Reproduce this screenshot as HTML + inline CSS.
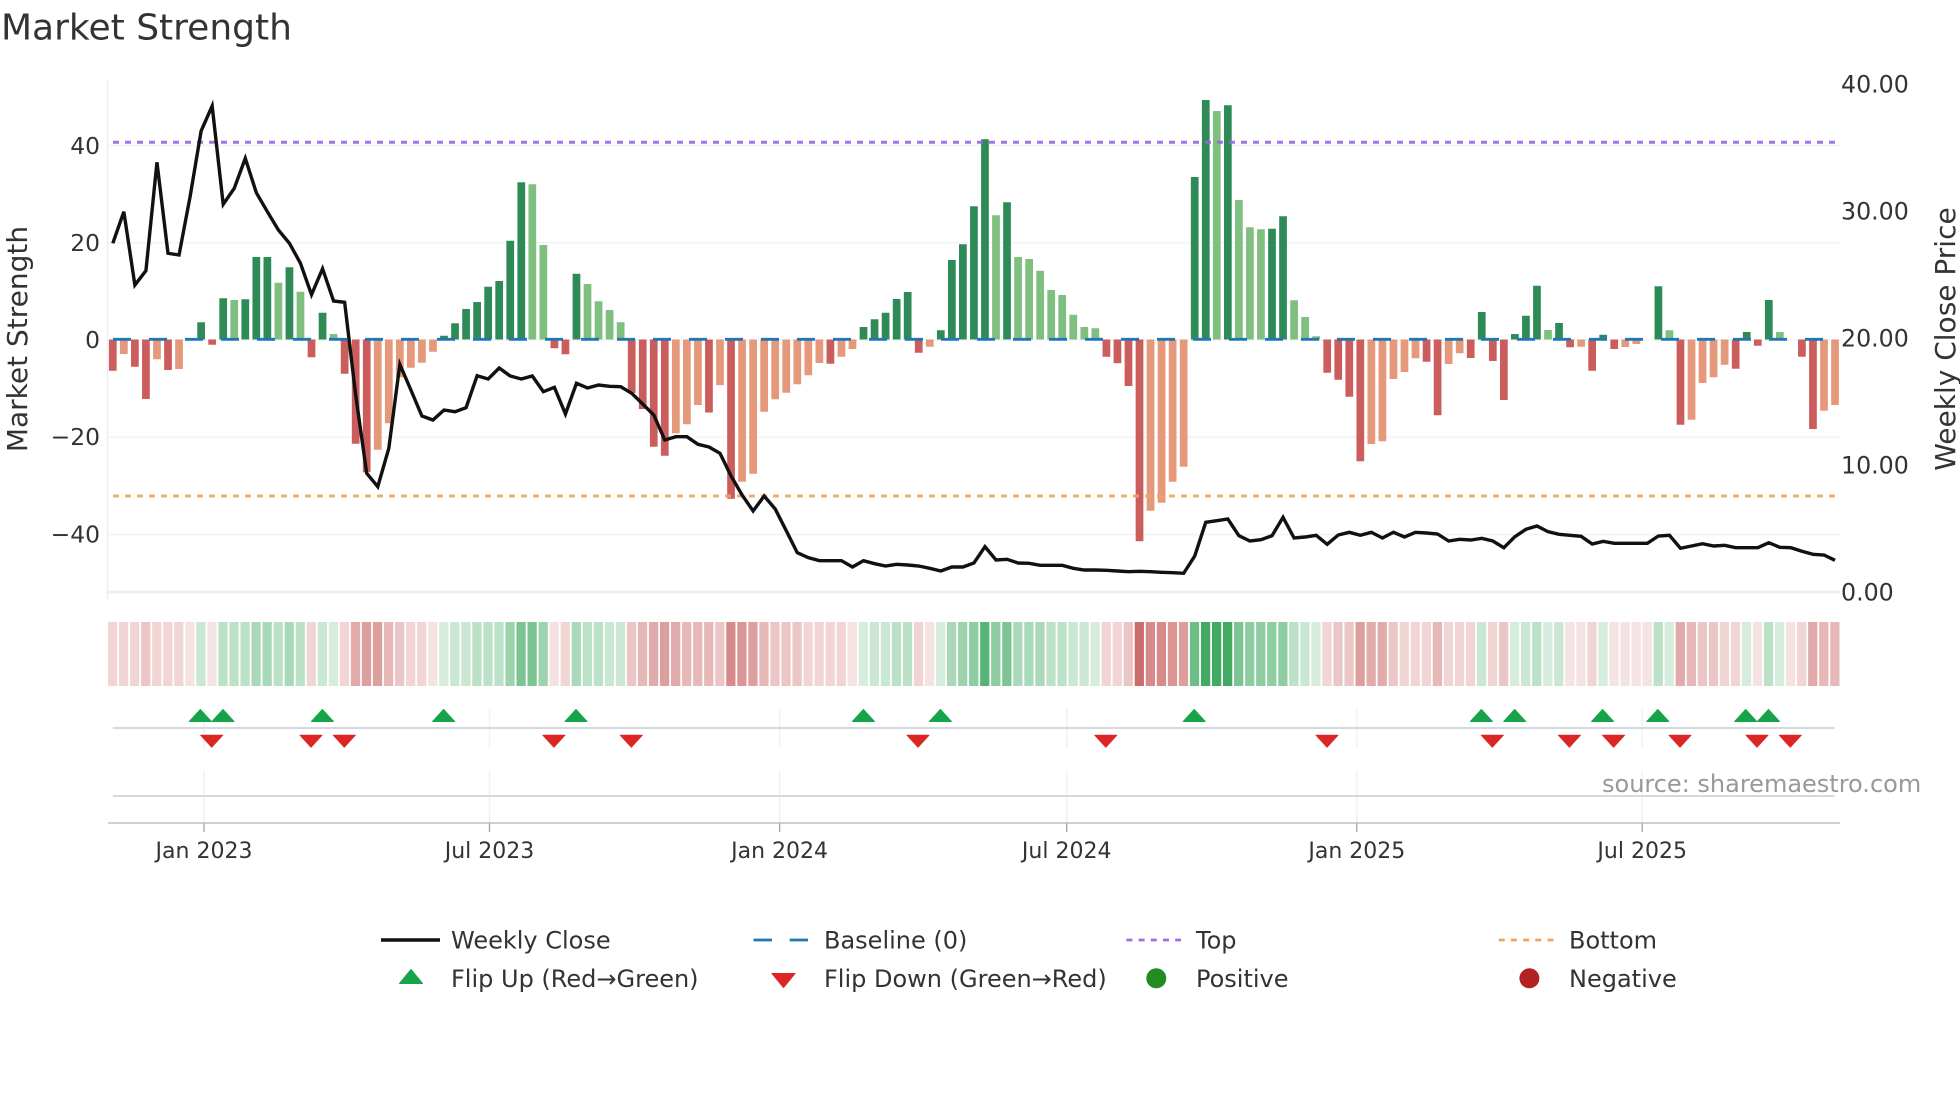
<!DOCTYPE html>
<html>
<head>
<meta charset="utf-8">
<title>Market Strength</title>
<style>
html,body{margin:0;padding:0;background:#fff}
svg{display:block}
text{font-family:"DejaVu Sans","Liberation Sans",sans-serif;fill:#333}
.yt{font-size:23.4px;text-anchor:end}
.rt{font-size:23.7px}
.xt{font-size:22px;text-anchor:middle}
.lg{font-size:24px}
</style>
</head>
<body>
<svg width="1960" height="1102" viewBox="0 0 1960 1102" xmlns="http://www.w3.org/2000/svg">
<rect width="1960" height="1102" fill="#fff"/>
<text x="1" y="39.5" style="font-size:36px">Market Strength</text>

<!-- grid -->
<g stroke="#f1f3f6" stroke-width="1.6" fill="none">
<path d="M107.5 80V599" stroke="#eef0f5"/>
<path d="M108 145.4H1840M108 242.7H1840M108 340H1840M108 437.3H1840M108 534.6H1840"/>
<path d="M108 592H1840" stroke="#eceef5" stroke-width="2.4"/>
</g>

<!-- bars -->
<g transform="translate(112.8 0) scale(11.04 1)" fill="none" stroke-width=".7">
<path stroke="#2e8b57" d="M8 339.5V322.3M10 339.5V298.3M12 339.5V299.3M13 339.5V257M14 339.5V257M16 339.5V267.3M19 339.5V312.7M30 339.5V335.7M31 339.5V323.3M32 339.5V309M33 339.5V302M34 339.5V286.7M35 339.5V281M36 339.5V240.7M37 339.5V182.3M42 339.5V273.7M68 339.5V327M69 339.5V319.3M70 339.5V312.7M71 339.5V299M72 339.5V292M75 339.5V330.3M76 339.5V260M77 339.5V244.3M78 339.5V206.3M79 339.5V139.3M81 339.5V202.3M98 339.5V177M99 339.5V100M101 339.5V105.3M105 339.5V228.7M106 339.5V216.3M124 339.5V312M127 339.5V334M128 339.5V315.7M129 339.5V285.7M131 339.5V323M135 339.5V334.7M140 339.5V286.3M148 339.5V332M150 339.5V300"/>
<path stroke="#7fbf7f" d="M11 339.5V300M15 339.5V282.7M17 339.5V291.7M20 339.5V334M38 339.5V184.3M39 339.5V245M43 339.5V284M44 339.5V301.3M45 339.5V310M46 339.5V322.3M80 339.5V215.3M82 339.5V257M83 339.5V259M84 339.5V270.7M85 339.5V290M86 339.5V295M87 339.5V314.7M88 339.5V327M89 339.5V328.3M100 339.5V111M102 339.5V200M103 339.5V227.3M104 339.5V229.3M107 339.5V300.3M108 339.5V317M109 339.5V336.3M130 339.5V330M141 339.5V330.3M151 339.5V332"/>
<path stroke="#cb5e5c" d="M0 339.5V370.7M2 339.5V366.7M3 339.5V399M5 339.5V370M9 339.5V344.7M18 339.5V357.3M21 339.5V373.7M22 339.5V443.7M23 339.5V472.3M40 339.5V348.3M41 339.5V354.3M47 339.5V393M48 339.5V409M49 339.5V446.7M50 339.5V455.7M54 339.5V412.5M56 339.5V498.7M65 339.5V363.7M73 339.5V352.7M90 339.5V356.7M91 339.5V363.3M92 339.5V386M93 339.5V541.3M110 339.5V372.7M111 339.5V379.7M112 339.5V396.7M113 339.5V461.3M119 339.5V361.7M120 339.5V415.3M123 339.5V358M125 339.5V361M126 339.5V400M132 339.5V347.3M134 339.5V370.7M136 339.5V349M142 339.5V424.7M147 339.5V368.7M149 339.5V345.7M153 339.5V356.7M154 339.5V429"/>
<path stroke="#e6987a" d="M1 339.5V354M4 339.5V359.3M6 339.5V369M24 339.5V449.7M25 339.5V423.3M26 339.5V377.3M27 339.5V367.7M28 339.5V362.7M29 339.5V351.7M51 339.5V433.3M52 339.5V424.3M53 339.5V405M55 339.5V385.3M57 339.5V481.7M58 339.5V473.7M59 339.5V411.7M60 339.5V399.3M61 339.5V392.7M62 339.5V384.3M63 339.5V375.3M64 339.5V363M66 339.5V356.7M67 339.5V349M74 339.5V346.7M94 339.5V510.7M95 339.5V502.7M96 339.5V481.7M97 339.5V466.7M114 339.5V444M115 339.5V441.3M116 339.5V379M117 339.5V372M118 339.5V358.3M121 339.5V364M122 339.5V353.3M133 339.5V346.7M137 339.5V347M138 339.5V344M143 339.5V419.7M144 339.5V383M145 339.5V377.3M146 339.5V364.7M155 339.5V410.7M156 339.5V405"/>
</g>

<!-- reference lines -->
<path d="M113 339.3H1835" stroke="#1f77b4" stroke-width="2.8" stroke-dasharray="18 18" fill="none"/>
<path d="M113 142.3H1835" stroke="#9467db" stroke-width="3" stroke-dasharray="6 6" fill="none" opacity=".9"/>
<path d="M113 496H1835" stroke="#f0a35e" stroke-width="3" stroke-dasharray="6 6" fill="none" opacity=".9"/>

<!-- weekly close line -->
<g transform="translate(112.8 0) scale(11.04 1)">
<polyline fill="none" stroke="#111" stroke-width="3.4" stroke-linejoin="miter" vector-effect="non-scaling-stroke" style="vector-effect:non-scaling-stroke" points="0,243.3 1,211.7 2,285 3,270.7 4,162.3 5,253.3 6,255 7,196.7 8,131 9,106 10,204.3 11,188.3 12,158.3 13,192.7 14,211.7 15,230 16,243.3 17,263.3 18,294.7 19,268.7 20,301 21,302.3 22,395 23,473.3 24,486.7 25,448.3 26,364.3 27,390 28,416 29,420 30,410 31,411.7 32,407.7 33,375.7 34,379 35,368 36,376 37,379 38,376 39,391.7 40,387.3 41,414 42,383.3 43,388 44,385 45,386.3 46,386.7 47,393.3 48,404 49,415 50,440 51,436.7 52,436.7 53,444.3 54,447 55,453.3 56,476 57,495 58,511 59,496 60,509 61,530.7 62,552.7 63,557.7 64,560.7 65,560.7 66,560.7 67,567 68,560.7 69,563.7 70,566 71,564.3 72,565 73,566 74,568.3 75,571 76,567 77,567 78,563 79,546.7 80,560 81,559.3 82,563 83,563.3 84,565.3 85,565.3 86,565.3 87,568.3 88,570 89,570 90,570.3 91,571 92,571.7 93,571.3 94,571.7 95,572.3 96,572.7 97,573.3 98,556 99,522.3 100,520.7 101,519 102,535.7 103,541 104,539.7 105,535.7 106,517.3 107,538 108,537 109,535.3 110,544.3 111,535 112,532.3 113,535.3 114,532.3 115,538 116,532.3 117,537 118,532.3 119,533 120,534 121,541 122,539.3 123,540 124,538.3 125,541 126,547.7 127,536.7 128,529.3 129,526 130,531.7 131,534.3 132,535.3 133,536.3 134,544 135,541.3 136,543.3 137,543.3 138,543.3 139,543.3 140,536 141,535.3 142,548.3 143,546 144,543.7 145,546 146,545.3 147,547.7 148,547.7 149,547.7 150,542.7 151,547.3 152,547.7 153,551.3 154,554.3 155,555 156,560.3"/>
</g>

<!-- heat strip -->
<g transform="translate(112.6 0) scale(11.04 1)" fill="none" stroke-width=".84">
<path stroke="#b22222" stroke-opacity=".13" d="M7 622V686M9 622V686M29 622V686M40 622V686M67 622V686M74 622V686M132 622V686M133 622V686M136 622V686M137 622V686M138 622V686M139 622V686M149 622V686M152 622V686"/>
<path stroke="#b22222" stroke-opacity=".19" d="M0 622V686M1 622V686M2 622V686M4 622V686M5 622V686M6 622V686M18 622V686M21 622V686M27 622V686M28 622V686M41 622V686M63 622V686M64 622V686M65 622V686M66 622V686M73 622V686M90 622V686M91 622V686M110 622V686M117 622V686M118 622V686M119 622V686M121 622V686M122 622V686M123 622V686M125 622V686M134 622V686M146 622V686M147 622V686M153 622V686"/>
<path stroke="#b22222" stroke-opacity=".26" d="M3 622V686M26 622V686M47 622V686M55 622V686M60 622V686M61 622V686M62 622V686M92 622V686M111 622V686M112 622V686M116 622V686M126 622V686M144 622V686M145 622V686"/>
<path stroke="#b22222" stroke-opacity=".32" d="M25 622V686M48 622V686M52 622V686M53 622V686M54 622V686M59 622V686M120 622V686M143 622V686M155 622V686M156 622V686"/>
<path stroke="#b22222" stroke-opacity=".38" d="M22 622V686M49 622V686M51 622V686M114 622V686M115 622V686M142 622V686M154 622V686"/>
<path stroke="#b22222" stroke-opacity=".44" d="M23 622V686M24 622V686M50 622V686M58 622V686M97 622V686M113 622V686"/>
<path stroke="#b22222" stroke-opacity=".48" d="M57 622V686M96 622V686"/>
<path stroke="#b22222" stroke-opacity=".53" d="M56 622V686M94 622V686M95 622V686"/>
<path stroke="#b22222" stroke-opacity=".66" d="M93 622V686"/>
<path stroke="#1e9a45" stroke-opacity=".18" d="M20 622V686M30 622V686M68 622V686M75 622V686M89 622V686M109 622V686M127 622V686M130 622V686M135 622V686M141 622V686M148 622V686M151 622V686"/>
<path stroke="#1e9a45" stroke-opacity=".24" d="M8 622V686M19 622V686M31 622V686M32 622V686M45 622V686M46 622V686M69 622V686M70 622V686M87 622V686M88 622V686M108 622V686M124 622V686M128 622V686M131 622V686"/>
<path stroke="#1e9a45" stroke-opacity=".3" d="M10 622V686M11 622V686M12 622V686M15 622V686M17 622V686M33 622V686M34 622V686M35 622V686M43 622V686M44 622V686M71 622V686M72 622V686M85 622V686M86 622V686M107 622V686M129 622V686M140 622V686M150 622V686"/>
<path stroke="#1e9a45" stroke-opacity=".38" d="M13 622V686M14 622V686M16 622V686M42 622V686M76 622V686M82 622V686M83 622V686M84 622V686"/>
<path stroke="#1e9a45" stroke-opacity=".44" d="M36 622V686M39 622V686M77 622V686"/>
<path stroke="#1e9a45" stroke-opacity=".5" d="M78 622V686M80 622V686M103 622V686M104 622V686M105 622V686M106 622V686"/>
<path stroke="#1e9a45" stroke-opacity=".58" d="M37 622V686M38 622V686M81 622V686M102 622V686"/>
<path stroke="#1e9a45" stroke-opacity=".64" d="M98 622V686"/>
<path stroke="#1e9a45" stroke-opacity=".74" d="M79 622V686"/>
<path stroke="#1e9a45" stroke-opacity=".84" d="M99 622V686M100 622V686M101 622V686"/>
</g>

<!-- lower panels -->
<g fill="none">
<path stroke="#eef0f4" stroke-width="1.4" d="M204 709V748M489.5 709V748M779.6 709V748M1066.7 709V748M1356.8 709V748M1642.2 709V748M204 770V823M489.5 770V823M779.6 770V823M1066.7 770V823M1356.8 770V823M1642.2 770V823"/>
<path stroke="#d5d8de" stroke-width="2" d="M112.8 728H1834.5M112.8 796H1834.5"/>
<path stroke="#cfd1d6" stroke-width="2" d="M108 823H1840"/>
<path stroke="#a0a4ab" stroke-width="1.3" d="M204 823V832M489.5 823V832M779.6 823V832M1066.7 823V832M1356.8 823V832M1642.2 823V832"/>
</g>

<!-- flips up -->
<path fill="#16a34a" stroke="#16a34a" stroke-width="1" stroke-linejoin="round" d="M200.3 709.5l11 12h-22zM223 709.5l11 12h-22zM322.4 709.5l11 12h-22zM443.6 709.5l11 12h-22zM576 709.5l11 12h-22zM863.4 709.5l11 12h-22zM940.4 709.5l11 12h-22zM1194.2 709.5l11 12h-22zM1481.4 709.5l11 12h-22zM1514.7 709.5l11 12h-22zM1602.6 709.5l11 12h-22zM1657.8 709.5l11 12h-22zM1745.7 709.5l11 12h-22zM1768.5 709.5l11 12h-22z"/>
<!-- flips down -->
<path fill="#dc2626" stroke="#dc2626" stroke-width="1" stroke-linejoin="round" d="M211.7 747.2l11-12h-22zM311 747.2l11-12h-22zM344.3 747.2l11-12h-22zM553.9 747.2l11-12h-22zM631.3 747.2l11-12h-22zM918 747.2l11-12h-22zM1105.8 747.2l11-12h-22zM1327 747.2l11-12h-22zM1492.3 747.2l11-12h-22zM1569.4 747.2l11-12h-22zM1613.6 747.2l11-12h-22zM1680 747.2l11-12h-22zM1757 747.2l11-12h-22zM1790.3 747.2l11-12h-22z"/>

<!-- left ticks -->
<text class="yt" x="100" y="154">40</text>
<text class="yt" x="100" y="251.2">20</text>
<text class="yt" x="100" y="348">0</text>
<text class="yt" x="100" y="445.2">−20</text>
<text class="yt" x="100" y="542.3">−40</text>
<!-- right ticks -->
<text class="rt" x="1841" y="92.7">40.00</text>
<text class="rt" x="1841" y="219.7">30.00</text>
<text class="rt" x="1841" y="346.7">20.00</text>
<text class="rt" x="1841" y="473.7">10.00</text>
<text class="rt" x="1841" y="600.7">0.00</text>
<!-- axis titles -->
<text transform="rotate(-90 27 339)" x="27" y="339" text-anchor="middle" style="font-size:28px">Market Strength</text>
<text transform="rotate(-90 1955 339)" x="1955" y="339" text-anchor="middle" style="font-size:28px">Weekly Close Price</text>
<!-- x ticks -->
<text class="xt" x="204" y="858">Jan 2023</text>
<text class="xt" x="489.5" y="858">Jul 2023</text>
<text class="xt" x="779.6" y="858">Jan 2024</text>
<text class="xt" x="1066.7" y="858">Jul 2024</text>
<text class="xt" x="1356.8" y="858">Jan 2025</text>
<text class="xt" x="1642.2" y="858">Jul 2025</text>

<text x="1602" y="792" style="font-size:24px;fill:#999">source: sharemaestro.com</text>

<!-- legend -->
<path d="M381 940H440" stroke="#111" stroke-width="3.4" fill="none"/>
<path d="M753.5 940H772M789.7 940H808" stroke="#1f77b4" stroke-width="2.8" fill="none"/>
<path d="M1126.4 940H1181" stroke="#9f6fe0" stroke-width="2.8" stroke-dasharray="6 6.2" fill="none"/>
<path d="M1498.7 940H1554" stroke="#f0a35e" stroke-width="2.8" stroke-dasharray="6 6.2" fill="none"/>
<path d="M411 969.5l11.5 14h-23z" fill="#16a34a" stroke="#16a34a" stroke-width="1" stroke-linejoin="round"/>
<path d="M783.5 987.5l11.5-14h-23z" fill="#dc2626" stroke="#dc2626" stroke-width="1" stroke-linejoin="round"/>
<circle cx="1156.3" cy="978.3" r="10" fill="#228b22"/>
<circle cx="1529.4" cy="978.3" r="10" fill="#b22222"/>
<text class="lg" x="451" y="948.5">Weekly Close</text>
<text class="lg" x="824" y="948.5">Baseline (0)</text>
<text class="lg" x="1196" y="948.5">Top</text>
<text class="lg" x="1569" y="948.5">Bottom</text>
<text class="lg" x="451" y="987">Flip Up (Red→Green)</text>
<text class="lg" x="824" y="987">Flip Down (Green→Red)</text>
<text class="lg" x="1196" y="987">Positive</text>
<text class="lg" x="1569" y="987">Negative</text>
</svg>
</body>
</html>
